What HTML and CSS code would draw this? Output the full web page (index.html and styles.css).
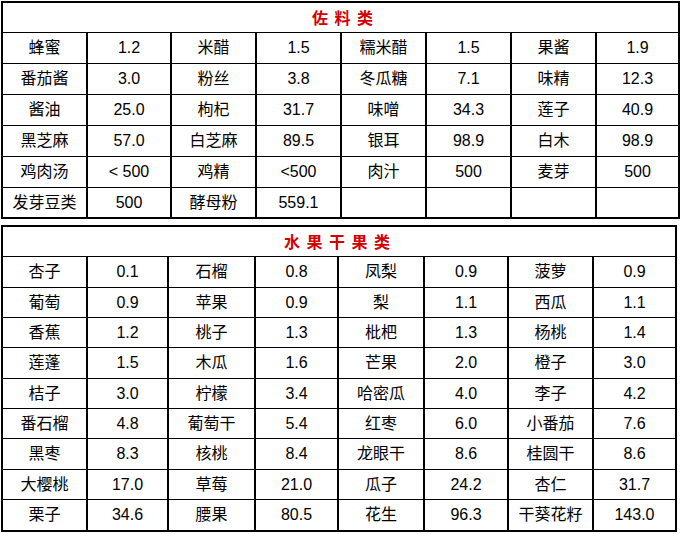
FILE: index.html
```html
<!DOCTYPE html>
<html lang="zh">
<head>
<meta charset="utf-8">
<link rel="stylesheet" href="styles.css">
</head>
<body>
<div class="page">
  <div class="tbl t1">
    <div class="title">佐 料 类</div>
    <div class="grid">
      <div>蜂蜜</div><div>1.2</div><div>米醋</div><div>1.5</div><div>糯米醋</div><div>1.5</div><div>果酱</div><div>1.9</div>
      <div>番茄酱</div><div>3.0</div><div>粉丝</div><div>3.8</div><div>冬瓜糖</div><div>7.1</div><div>味精</div><div>12.3</div>
      <div>酱油</div><div>25.0</div><div>枸杞</div><div>31.7</div><div>味噌</div><div>34.3</div><div>莲子</div><div>40.9</div>
      <div>黑芝麻</div><div>57.0</div><div>白芝麻</div><div>89.5</div><div>银耳</div><div>98.9</div><div>白木</div><div>98.9</div>
      <div>鸡肉汤</div><div>&lt; 500</div><div>鸡精</div><div>&lt;500</div><div>肉汁</div><div>500</div><div>麦芽</div><div>500</div>
      <div>发芽豆类</div><div>500</div><div>酵母粉</div><div>559.1</div><div></div><div></div><div></div><div></div>
    </div>
  </div>
  <div class="tbl t2">
    <div class="title">水 果 干 果 类</div>
    <div class="grid">
      <div>杏子</div><div>0.1</div><div>石榴</div><div>0.8</div><div>凤梨</div><div>0.9</div><div>菠萝</div><div>0.9</div>
      <div>葡萄</div><div>0.9</div><div>苹果</div><div>0.9</div><div>梨</div><div>1.1</div><div>西瓜</div><div>1.1</div>
      <div>香蕉</div><div>1.2</div><div>桃子</div><div>1.3</div><div>枇杷</div><div>1.3</div><div>杨桃</div><div>1.4</div>
      <div>莲蓬</div><div>1.5</div><div>木瓜</div><div>1.6</div><div>芒果</div><div>2.0</div><div>橙子</div><div>3.0</div>
      <div>桔子</div><div>3.0</div><div>柠檬</div><div>3.4</div><div>哈密瓜</div><div>4.0</div><div>李子</div><div>4.2</div>
      <div>番石榴</div><div>4.8</div><div>葡萄干</div><div>5.4</div><div>红枣</div><div>6.0</div><div>小番茄</div><div>7.6</div>
      <div>黑枣</div><div>8.3</div><div>核桃</div><div>8.4</div><div>龙眼干</div><div>8.6</div><div>桂圆干</div><div>8.6</div>
      <div>大樱桃</div><div>17.0</div><div>草莓</div><div>21.0</div><div>瓜子</div><div>24.2</div><div>杏仁</div><div>31.7</div>
      <div>栗子</div><div>34.6</div><div>腰果</div><div>80.5</div><div>花生</div><div>96.3</div><div>干葵花籽</div><div>143.0</div>
    </div>
  </div>
</div>
</body>
</html>
```
FILE: styles.css
```css
* { box-sizing: border-box; }
html, body {
  margin: 0;
  padding: 0;
  background: #fff;
}
body {
  font-family: "Liberation Sans", "Noto Sans CJK SC", sans-serif;
  font-size: 16px;
  color: #000;
}
.page {
  padding: 1px 0 0 1px;
  display: flex;
  flex-direction: column;
  gap: 6px;
  align-items: flex-start;
}
.tbl {
  border: 2px solid #000;
  background: #fff;
}
.t1 { width: 679px; }
.t2 { width: 676px; }
.title {
  height: 30px;
  border-bottom: 1px solid #000;
  display: flex;
  align-items: center;
  justify-content: center;
  color: #d40000;
  font-weight: bold;
  font-size: 16px;
  letter-spacing: 1px;
  white-space: pre;
  padding-bottom: 2px;
}
.t1 .title { padding-left: 5px; }
.t2 .title { padding-right: 3px; }
.grid {
  display: grid;
}
.t1 .grid {
  grid-template-columns: 85px 84px 85px 85px 85px 85px 85px 81px;
  grid-template-rows: 31px 31px 31px 31px 31px 29px;
}
.t2 .grid {
  grid-template-columns: 85px 81px 87px 83px 86px 84px 85px 81px;
  grid-template-rows: 31px 30px 30px 31px 30px 30px 31px 30px 30px;
}
.grid > div {
  display: flex;
  align-items: center;
  justify-content: center;
  border-right: 2px solid #000;
  border-bottom: 1px solid #000;
  white-space: nowrap;
  line-height: 1;
}
.grid > div:nth-child(8n) { border-right: none; }
.t1 .grid > div:nth-last-child(-n+8),
.t2 .grid > div:nth-last-child(-n+8) { border-bottom: none; }
```
